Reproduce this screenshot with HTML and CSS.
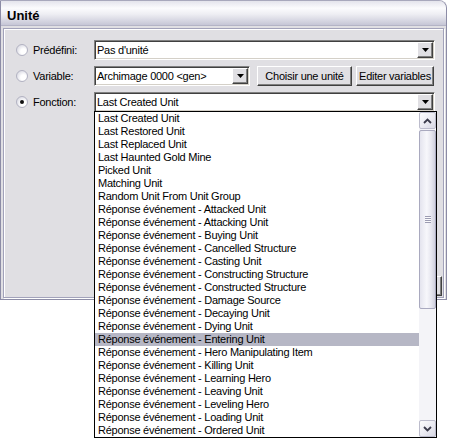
FILE: index.html
```html
<!DOCTYPE html>
<html lang="fr">
<head>
<meta charset="utf-8">
<title>Unité</title>
<link rel="stylesheet" href="styles.css">
</head>
<body>
<div class="window">
  <div class="titlebar">Unité</div>
  <div class="frame">
    <div class="row">
      <span class="radio"></span><span class="label">Prédéfini:</span>
      <div class="combo w-wide"><span class="val">Pas d'unité</span><span class="dd"><svg width="7" height="4" viewBox="0 0 7 4"><polygon points="0,0 7,0 3.5,4" fill="#000"/></svg></span></div>
    </div>
    <div class="row">
      <span class="radio"></span><span class="label">Variable:</span>
      <div class="combo w-narrow"><span class="val">Archimage 0000 &lt;gen&gt;</span><span class="dd"><svg width="7" height="4" viewBox="0 0 7 4"><polygon points="0,0 7,0 3.5,4" fill="#000"/></svg></span></div>
      <button class="btn btn-choose">Choisir une unité</button>
      <button class="btn btn-edit">Editer variables</button>
    </div>
    <div class="row">
      <span class="radio checked"></span><span class="label">Fonction:</span>
      <div class="combo w-wide"><span class="val">Last Created Unit</span><span class="dd"><svg width="7" height="4" viewBox="0 0 7 4"><polygon points="0,0 7,0 3.5,4" fill="#000"/></svg></span></div>
    </div>
    <div class="footer"><button class="btn btn-hidden">OK</button></div>
  </div>
</div>

<div class="popup">
  <ul class="items">
    <li>Last Created Unit</li>
    <li>Last Restored Unit</li>
    <li>Last Replaced Unit</li>
    <li>Last Haunted Gold Mine</li>
    <li>Picked Unit</li>
    <li>Matching Unit</li>
    <li>Random Unit From Unit Group</li>
    <li>Réponse événement - Attacked Unit</li>
    <li>Réponse événement - Attacking Unit</li>
    <li>Réponse événement - Buying Unit</li>
    <li>Réponse événement - Cancelled Structure</li>
    <li>Réponse événement - Casting Unit</li>
    <li>Réponse événement - Constructing Structure</li>
    <li>Réponse événement - Constructed Structure</li>
    <li>Réponse événement - Damage Source</li>
    <li>Réponse événement - Decaying Unit</li>
    <li>Réponse événement - Dying Unit</li>
    <li class="sel">Réponse événement - Entering Unit</li>
    <li>Réponse événement - Hero Manipulating Item</li>
    <li>Réponse événement - Killing Unit</li>
    <li>Réponse événement - Learning Hero</li>
    <li>Réponse événement - Leaving Unit</li>
    <li>Réponse événement - Leveling Hero</li>
    <li>Réponse événement - Loading Unit</li>
    <li>Réponse événement - Ordered Unit</li>
  </ul>
  <div class="scrollbar">
    <div class="sb-btn"><svg width="9" height="6" viewBox="0 0 9 6"><path d="M1 5 L4.5 1.5 L8 5" fill="none" stroke="#3c3c4c" stroke-width="1.8"/></svg></div>
    <div class="sb-thumb"><span class="grip"></span></div>
    <div class="sb-track"></div>
    <div class="sb-btn"><svg width="9" height="6" viewBox="0 0 9 6"><path d="M1 1 L4.5 4.5 L8 1" fill="none" stroke="#3c3c4c" stroke-width="1.8"/></svg></div>
  </div>
</div>
</body>
</html>
```

FILE: styles.css
```css
body {
  margin: 0;
  background: #fff;
  font-family: "Liberation Sans", Arial, sans-serif;
  font-size: 11px;
  letter-spacing: -0.25px;
  color: #000;
}

.window {
  width: 447px;
  height: 300px;
  box-sizing: border-box;
  border: 1px solid #8c8ca6;
  border-top-color: #a8a8bc;
  border-top-right-radius: 8px;
  background: #e0dfe3;
  display: flex;
  flex-direction: column;
}

.titlebar {
  height: 25px;
  box-sizing: border-box;
  padding: 4px 0 0 6px;
  line-height: 22px;
  font-size: 13px;
  font-weight: bold;
  letter-spacing: 0;
  border-top-right-radius: 7px;
  border-bottom: 1px solid #b4b4c6;
  background: linear-gradient(#e4e4ec 0, #fbfbfd 30%, #eeeef3 55%, #c6c6d6 100%);
}

.frame {
  flex: 1;
  margin: 2px 2px 1px 2px;
  border: 1px solid #a2a2ba;
  box-shadow: inset 1px 1px 0 #fff, 1px 1px 0 #fff;
  padding: 11px 0 0 12px;
  display: flex;
  flex-direction: column;
  gap: 6px;
}

.row {
  display: flex;
  align-items: center;
  height: 20px;
}

.radio {
  width: 12px;
  height: 12px;
  box-sizing: border-box;
  border-radius: 50%;
  border: 1px solid #b2b2c2;
  background: radial-gradient(circle at 65% 65%, #ffffff 30%, #ececf1 55%, #cfcfda 100%);
  display: flex;
  align-items: center;
  justify-content: center;
  flex: none;
}

.radio.checked::after {
  content: "";
  width: 4px;
  height: 4px;
  border-radius: 50%;
  background: #111;
}

.label {
  width: 61px;
  margin-left: 5px;
  flex: none;
}

.combo {
  height: 20px;
  box-sizing: border-box;
  background: #fff;
  border: 1px solid;
  border-color: #808080 #ffffff #ffffff #808080;
  box-shadow: inset 1px 1px 0 #404040, inset -1px -1px 0 #d4d0c8;
  display: flex;
  align-items: center;
  justify-content: space-between;
  padding: 0 1px 0 2px;
  flex: none;
}

.w-wide { width: 341px; }
.w-narrow { width: 156px; }

.dd {
  width: 16px;
  height: 16px;
  box-sizing: border-box;
  background: #e0dfe3;
  border: 1px solid;
  border-color: #fff #404040 #404040 #fff;
  box-shadow: inset -1px -1px 0 #808080;
  display: flex;
  align-items: center;
  justify-content: center;
}

.btn {
  height: 20px;
  box-sizing: border-box;
  margin: 0;
  padding: 0;
  font: inherit;
  letter-spacing: inherit;
  color: #000;
  background: #e0dfe3;
  border: 1px solid;
  border-color: #fff #404040 #404040 #fff;
  box-shadow: inset -1px -1px 0 #808080;
  flex: none;
}

.btn-choose { width: 95px; margin-left: 7px; }
.btn-edit { width: 78px; margin-left: 4px; }

.footer {
  margin-top: auto;
  display: flex;
  justify-content: flex-end;
  padding: 0 1px 1px 0;
}

.btn-hidden { width: 60px; }

.popup {
  position: absolute;
  left: 94px;
  top: 111px;
  width: 343px;
  height: 327px;
  box-sizing: border-box;
  border: 1px solid #000;
  background: #fff;
  display: flex;
}

.items {
  list-style: none;
  margin: 0;
  padding: 0;
  flex: 1;
}

.items li {
  height: 13px;
  line-height: 13px;
  padding-left: 3px;
  white-space: nowrap;
}

.items li.sel {
  background: #b6b7c5;
}

.scrollbar {
  width: 17px;
  display: flex;
  flex-direction: column;
  background: #f4f4f8;
}

.sb-btn {
  height: 17px;
  box-sizing: border-box;
  border: 1px solid #bcbccc;
  border-radius: 2px;
  background: linear-gradient(135deg, #fdfdfe 0, #ececf3 50%, #d8d8e4 100%);
  display: flex;
  align-items: center;
  justify-content: center;
  flex: none;
}

.sb-thumb {
  height: 179px;
  margin-top: 1px;
  box-sizing: border-box;
  border: 1px solid #a9a9bf;
  border-radius: 2px;
  background: linear-gradient(to right, #e4e4ee 0, #f7f7fb 45%, #e6e6ef 75%, #d0d0de 100%);
  display: flex;
  align-items: center;
  justify-content: center;
  flex: none;
}

.grip {
  width: 6px;
  height: 7px;
  background: repeating-linear-gradient(#9c9cb2 0, #9c9cb2 1px, #fafafc 1px, #fafafc 2px);
}

.sb-track {
  flex: 1;
}
```
